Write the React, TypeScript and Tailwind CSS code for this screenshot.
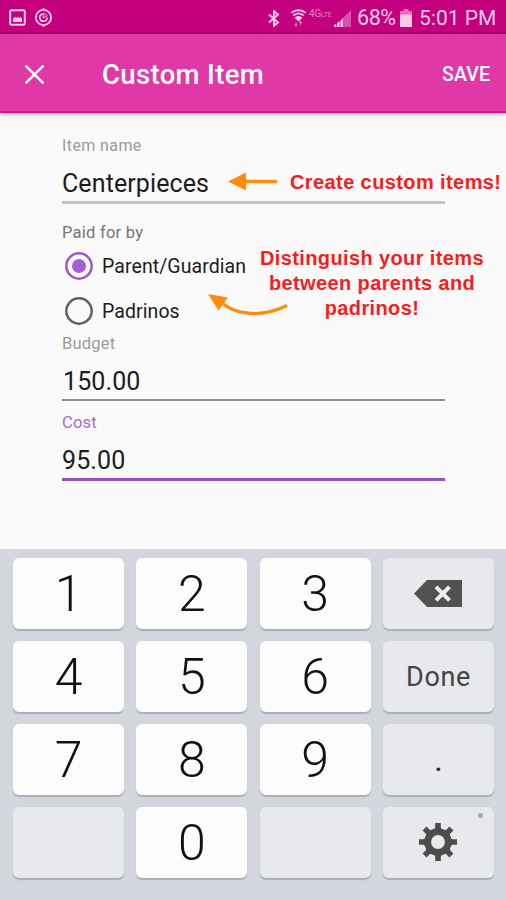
import { useState } from 'react';

type Payer = 'parent' | 'padrinos';

interface KeyDef {
  id: string;
  label?: string;
  kind: 'digit' | 'action' | 'blank' | 'dot' | 'backspace' | 'settings';
}

const KEYS: KeyDef[] = [
  { id: '1', label: '1', kind: 'digit' },
  { id: '2', label: '2', kind: 'digit' },
  { id: '3', label: '3', kind: 'digit' },
  { id: 'backspace', kind: 'backspace' },
  { id: '4', label: '4', kind: 'digit' },
  { id: '5', label: '5', kind: 'digit' },
  { id: '6', label: '6', kind: 'digit' },
  { id: 'done', label: 'Done', kind: 'action' },
  { id: '7', label: '7', kind: 'digit' },
  { id: '8', label: '8', kind: 'digit' },
  { id: '9', label: '9', kind: 'digit' },
  { id: 'dot', label: '.', kind: 'dot' },
  { id: 'blank-left', kind: 'blank' },
  { id: '0', label: '0', kind: 'digit' },
  { id: 'blank-right', kind: 'blank' },
  { id: 'settings', kind: 'settings' },
];

const KEY_STYLES: Record<KeyDef['kind'], string> = {
  digit: 'bg-[#fcfcfc] text-[50px] font-light text-[#111]',
  action: 'bg-[#e7e9ed] pt-[2px] text-[27px] tracking-[0.6px] text-[#444]',
  blank: 'bg-[#e7e9ed]',
  dot: 'bg-[#e7e9ed] text-[32px] text-[#222]',
  backspace: 'bg-[#e7e9ed]',
  settings: 'bg-[#e7e9ed] pb-[1px]',
};

const StatusBar = () => (
  <div className="flex h-[34px] items-center justify-between bg-[#c4007f] pr-[9px] pb-[1px] pl-[9px] text-[#f9c9e6] shadow-[inset_0_-2px_2px_rgba(110,0,75,0.3)]">
    <div className="flex items-center gap-2 pt-[2px]">
      <svg width="17" height="17" viewBox="0 0 17 17" fill="none">
        <rect x="1.2" y="1.2" width="14.6" height="14.6" rx="1.2" stroke="currentColor" strokeWidth="2" />
        <path d="M4 13v-3l2-2.3 1.4 1.6L8.6 7.5l1.6 1.8 1.3-1.6L13 10v3z" fill="currentColor" />
      </svg>
      <svg width="19" height="19" viewBox="0 0 19 19" fill="none" stroke="currentColor">
        <circle cx="9.5" cy="9.5" r="7.6" strokeWidth="1.8" />
        <path d="M8.5 6a3.7 3.7 0 1 0 4.7 3.5" strokeWidth="1.5" />
        <path d="M9.3 10V5.5c2 0 3.2 1 3.7 2.5z" strokeWidth="1" />
        <path d="M9.5 0v2M9.5 17v2" strokeWidth="1.6" />
      </svg>
    </div>
    <div className="flex items-center pt-[3px]">
      <svg width="12" height="17" viewBox="0 0 12 17" fill="none" stroke="currentColor" strokeWidth="2">
        <path d="M1 4.4l9 8L6 15.8V1.2l4 3.4-9 8" />
      </svg>
      <svg className="ml-[10px]" width="17" height="18" viewBox="0 0 17 18" fill="none" stroke="currentColor">
        <path d="M1.3 3.9C5.5.3 11.5.3 15.7 3.9" strokeWidth="1.9" />
        <path d="M3.4 6.5c3-2.5 7.2-2.5 10.2 0" strokeWidth="1.7" />
        <path d="M5.6 8.8c1.7-1.3 4.1-1.3 5.8 0L8.5 11.5z" strokeWidth="1.3" fill="currentColor" />
        <path d="M6 17v-4M4.5 15.3L6 17l1.3-1.5M10.5 12.5v4M9.2 14l1.3-1.5 1.5 1.500" strokeWidth="1.2" opacity="0.55" />
      </svg>
      <span className="ml-[2px] w-[22px] -translate-y-[4px] text-[10px] leading-none tracking-[-0.2px] whitespace-nowrap text-[#e283bf]">
        4G<span className="text-[7px]">LTE</span>
      </span>
      <svg className="ml-[3px]" width="17" height="17" viewBox="0 0 17 17" fill="currentColor">
        <path d="M0 17L17 0v17z" opacity="0.4" />
        <path d="M0 17v-2l2-1v3zM3.2 17v-4l2.2-2v6zM6.7 17V10.500l2.2-2.300V17z" />
      </svg>
      <span className="ml-[6px] w-[41px] text-[21.5px] leading-none tracking-[-0.4px]">68%</span>
      <svg className="ml-[2px]" width="12" height="18" viewBox="0 0 12 18" fill="currentColor">
        <path d="M3.5 0h5v2H12v4H0V2h3.500z" opacity="0.55" />
        <path d="M0 5.5h12V18H0z" />
      </svg>
      <span className="ml-[7px] w-[78px] text-[21px] leading-none whitespace-nowrap">5:01 PM</span>
    </div>
  </div>
);

const AppBar = () => (
  <header className="relative z-10 flex h-[79px] items-center border-b-2 border-[#cf1592] bg-[#e138a8] pt-[3px] pr-4 pl-[25px] text-white shadow-[0_1px_4px_rgba(0,0,0,0.35)]">
    <svg width="19" height="19" viewBox="0 0 19 19" stroke="currentColor" strokeWidth="2.5" strokeLinecap="round">
      <path d="M1.3 1.3l16.4 16.4M17.7 1.3L1.3 17.7" />
    </svg>
    <h1 className="ml-[58px] pt-[2px] text-[27.5px] leading-none font-medium tracking-[0.35px]">Custom Item</h1>
    <button className="ml-auto pt-[2px] text-[19.5px] leading-none font-medium tracking-[0.1px]">SAVE</button>
  </header>
);

interface RadioRowProps {
  label: string;
  checked: boolean;
  onSelect: () => void;
}

const RadioRow = ({ label, checked, onSelect }: RadioRowProps) => (
  <button className="flex h-[45px] items-center pl-[3px] text-left" onClick={onSelect}>
    <svg width="28" height="28" viewBox="0 0 28 28">
      <circle cx="14" cy="14" r="12.7" fill="none" strokeWidth="2.5" stroke={checked ? '#9c58cc' : '#5f5f5f'} />
      {checked && <circle cx="14" cy="14" r="7" fill="#a55fd5" />}
    </svg>
    <span className="ml-[9px] pt-[2px] text-[19.5px] leading-none tracking-[0.08px] text-[#1c1c1c]">{label}</span>
  </button>
);

const KeyIcon = ({ kind }: { kind: KeyDef['kind'] }) => {
  if (kind === 'backspace') {
    return (
      <svg width="48" height="27" viewBox="0 0 48 27">
        <path d="M0 13.5L13 0h35v27H13z" fill="#515152" />
        <path d="M22 6.8l13.5 13.5M35.5 6.8L22 20.3" stroke="#eceef1" strokeWidth="4" />
      </svg>
    );
  }
  return (
    <svg width="40" height="40" viewBox="-20 -20 40 40" fill="#4d4d4e">
      <circle r="10.3" fill="none" stroke="#4d4d4e" strokeWidth="6.8" />
      {[0, 45, 90, 135, 180, 225, 270, 315].map((angle) => (
        <path key={angle} d="M-4-12L-2.8-14.5V-19H2.8V-14.5L4-12z" transform={`rotate(${angle})`} />
      ))}
    </svg>
  );
};

export default function App() {
  const [payer, setPayer] = useState<Payer>('parent');

  return (
    <div className="relative flex h-[900px] w-[506px] flex-col overflow-hidden bg-[#fafafa] font-[Roboto,sans-serif]">
      <StatusBar />
      <AppBar />

      {/* Form */}
      <main className="flex flex-1 flex-col pr-[61px] pl-[62px]">
        <label className="mt-[24px] text-[16px] leading-[18px] tracking-[0.4px] text-[#9b9b9b]">Item name</label>
        <div className="mt-[9px] h-[40px] border-b-3 border-[#c4c4c4] text-[25px] leading-[40px] tracking-[0.1px] text-[#1c1c1c]">
          Centerpieces
        </div>

        <span className="mt-[20px] text-[16.5px] leading-[18px] tracking-[0.25px] text-[#757575]">Paid for by</span>
        <div className="mt-[1px] flex flex-col">
          <RadioRow label="Parent/Guardian" checked={payer === 'parent'} onSelect={() => setPayer('parent')} />
          <RadioRow label="Padrinos" checked={payer === 'padrinos'} onSelect={() => setPayer('padrinos')} />
        </div>

        <label className="mt-[1px] text-[16.5px] leading-[19px] tracking-[0.2px] text-[#9b9b9b]">Budget</label>
        <div className="mt-[8px] h-[40px] border-b-2 border-[#8d8d8d] pl-px text-[25px] leading-[42px] tracking-[0.1px] text-[#1c1c1c]">
          150.00
        </div>

        <label className="mt-[12px] text-[16.5px] leading-[20px] tracking-[0.2px] text-[#a668d4]">Cost</label>
        <div className="mt-[7px] h-[41px] border-b-3 border-[#9450c8] text-[25px] leading-[41px] tracking-[0.1px] text-[#1c1c1c]">
          95.00
        </div>
      </main>

      {/* Callouts drawn over the form */}
      <div className="pointer-events-none absolute inset-0 font-['Liberation_Sans',sans-serif] text-[20px] leading-[25px] font-bold text-[#f91c1c]">
        <p className="absolute top-[170px] left-[290px] tracking-[0.4px] whitespace-nowrap">Create custom items!</p>
        <p className="absolute top-[246px] left-[252px] w-[240px] text-center tracking-[0.38px]">
          Distinguish your items
          <br />
          between parents and
          <br />
          padrinos!
        </p>
        <svg className="absolute top-[172px] left-[228px]" width="50" height="20" viewBox="0 0 50 20">
          <path d="M0 9.5L18 0.5v18z" fill="#ff8c0a" />
          <path d="M16 9.5h33" stroke="#ff8c0a" strokeWidth="3.4" />
        </svg>
        <svg className="absolute top-[292px] left-[207px]" width="82" height="26" viewBox="0 0 82 26">
          <path d="M1 2l20 3.5L11.5 18.5z" fill="#ff8c0a" />
          <path d="M15 11c15 12.5 41 14.5 65 2.5" fill="none" stroke="#ff8c0a" strokeWidth="3.2" />
        </svg>
      </div>

      {/* Numeric keypad */}
      <section className="grid h-[351px] grid-cols-[111px_111px_111px_111px] grid-rows-[71px_71px_71px_71px] justify-between gap-y-3 bg-[#d3d7dd] pt-[9px] pr-[12px] pl-[13px]">
        {KEYS.map((key) => (
          <button
            key={key.id}
            className={`relative flex items-center justify-center rounded-[6px] leading-none shadow-[0_2px_1px_rgba(120,125,135,0.45)] ${KEY_STYLES[key.kind]}`}
          >
            {key.label ?? (key.kind !== 'blank' && <KeyIcon kind={key.kind} />)}
            {key.kind === 'settings' && (
              <span className="absolute top-[6px] right-[11px] size-[5px] rounded-full bg-[#a7a8ab]" />
            )}
          </button>
        ))}
      </section>
    </div>
  );
}
